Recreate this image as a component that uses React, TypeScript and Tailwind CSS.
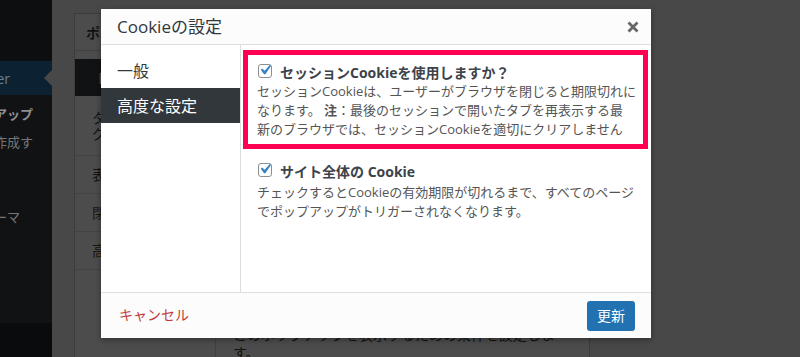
import React from "react";

const CheckBox = () => (
  <span className="relative inline-block h-[14px] w-[14px] shrink-0 rounded-[3px] border border-[#8c8f94] bg-white">
    <svg viewBox="0 0 20 20" className="absolute -left-[4px] -top-[5px] h-[20px] w-[20px]">
      <path d="M14.83 4.89l1.34.94-5.81 8.38H9.02L5.78 9.67l1.34-1.25 2.57 2.4z" fill="#3582c4" />
    </svg>
  </span>
);

const Sidebar = () => (
  <div className="flex w-[52px] shrink-0 flex-col bg-[#111214] text-[13px] whitespace-nowrap">
    <div className="h-[61px] bg-[#0d0e10]" />
    <div className="relative flex h-[34px] items-center justify-end bg-[#0c2233] pr-[42px] text-[14px] text-[#6f7e8a]">
      Popup Maker
      <span className="absolute right-0 top-[9px] border-y-[8px] border-r-[8px] border-y-transparent border-r-[#484848]" />
    </div>
    <div className="mt-[11px] flex h-[18px] items-center justify-end pr-[19px] font-bold text-[#8e8e8e]">
      ポップアップ
    </div>
    <div className="mt-[10px] flex h-[18px] items-center justify-end pr-[19px] text-[#767676]">
      新しいポップアップを作成す
    </div>
    <div className="mt-[57px] flex h-[18px] items-center justify-end pr-[32px] text-[#767676]">
      ポップアップテーマ
    </div>
    <div className="flex-1" />
    <div className="h-[34px] bg-[#0a0b0c]" />
  </div>
);

const BackPanel = () => (
  <div className="flex h-[400px] w-[516px] flex-col border border-[#3c3c3c] bg-[#4c4c4c] text-[14px] text-[#121212]">
    <div className="flex h-[37px] shrink-0 items-center border-b border-[#404040] pl-[11px] font-semibold">
      ポップアップ設定
    </div>
    <div className="flex flex-1">
      <div className="w-[141px] shrink-0 border-r border-[#404040] pt-[8px]">
        <div className="flex h-[37px] items-center bg-[#111214] pl-[20px] text-[#5c5c5c]">トリガー</div>
        <div className="flex h-[60px] flex-col justify-center border-b border-[#444444] pl-[17px] leading-[16px]">
          <span>ターゲティン</span>
          <span>グ</span>
        </div>
        <div className="flex h-[38px] items-center border-b border-[#444444] pl-[17px]">表示</div>
        <div className="flex h-[38px] items-center border-b border-[#444444] pl-[17px] text-[#1e1408]">閉じる</div>
        <div className="flex h-[38px] items-center border-b border-[#444444] pl-[17px] text-[#1a140a]">高度な設定</div>
      </div>
      <div className="flex-1 pl-[17px] pt-[275px] leading-[18px] text-[#111111]">
        <p>このポップアップを表示するための条件を設定しま</p>
        <p>す。</p>
      </div>
    </div>
  </div>
);

const Modal = () => (
  <div className="absolute left-[101px] top-[9px] flex h-[329px] w-[550px] flex-col bg-white shadow-[0_2px_6px_rgba(0,0,0,0.35)]">
    <div className="flex h-[36px] shrink-0 items-center justify-between border-b border-[#dddddd] bg-[#fcfcfc] pl-[16px] pr-[12px]">
      <span className="text-[17px] text-[#32373c]">Cookieの設定</span>
      <svg viewBox="0 0 12 12" className="h-[12px] w-[12px]">
        <path d="M1.5 1.5L10.5 10.5M10.5 1.5L1.5 10.5" stroke="#666666" strokeWidth="2.8" />
      </svg>
    </div>

    <div className="flex min-h-0 flex-1">
      <nav className="w-[140px] shrink-0 border-r border-[#dddddd] pt-[8px] text-[16px]">
        <div className="flex h-[35px] items-center pl-[16px] text-[#32373c]">一般</div>
        <div className="flex h-[35px] items-center bg-[#32373c] pl-[16px] text-white">高度な設定</div>
      </nav>

      <div className="flex-1 whitespace-nowrap">
        <div className="ml-[2px] mr-[3px] mt-[5px] border-[5px] border-[#ff0052] pb-[5px] pl-[9px] pt-[8px]">
          <div className="flex h-[18px] items-center">
            <span className="ml-[1px]">
              <CheckBox />
            </span>
            <span className="ml-[8px] text-[14px] font-bold text-[#3c434a]">
              セッションCookieを使用しますか？
            </span>
          </div>
          <p className="mt-[1px] text-[13px] leading-[19px] text-[#555555]">
            セッションCookieは、ユーザーがブラウザを閉じると期限切れに
            <br />
            なります。 <b className="font-bold">注</b>：最後のセッションで開いたタブを再表示する最
            <br />
            新のブラウザでは、セッションCookieを適切にクリアしません
          </p>
        </div>

        <div className="mt-[13px] pl-[16px]">
          <div className="flex h-[18px] items-center">
            <span className="ml-[1px]">
              <CheckBox />
            </span>
            <span className="ml-[8px] text-[14px] font-bold text-[#3c434a]">サイト全体の Cookie</span>
          </div>
          <p className="mt-[3px] text-[13px] leading-[19px] text-[#555555]">
            チェックするとCookieの有効期限が切れるまで、すべてのページ
            <br />
            でポップアップがトリガーされなくなります。
          </p>
        </div>
      </div>
    </div>

    <div className="flex h-[46px] shrink-0 items-center justify-between border-t border-[#dddddd] bg-[#fcfcfc] pl-[18px] pr-[16px]">
      <span className="mb-[3px] text-[14px] text-[#c23c3c]">キャンセル</span>
      <button className="flex h-[30px] w-[48px] items-center justify-center rounded-[3px] bg-[#2271b1] text-[14px] text-white">
        更新
      </button>
    </div>
  </div>
);

export default function App() {
  return (
    <div className="relative flex h-[357px] w-[800px] overflow-hidden bg-[#484848] font-['Open_Sans','Noto_Sans_CJK_JP',sans-serif]">
      <Sidebar />
      <div className="pl-[22px] pt-[13px]">
        <BackPanel />
      </div>
      <Modal />
    </div>
  );
}
